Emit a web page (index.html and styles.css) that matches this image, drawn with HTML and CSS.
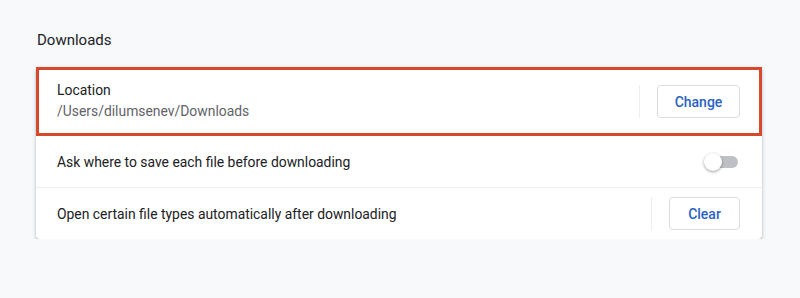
FILE: index.html
```html
<!DOCTYPE html>
<html>
<head>
<meta charset="utf-8">
<link rel="stylesheet" href="styles.css">
</head>
<body>
<div class="page">
  <h2 class="section-title">Downloads</h2>
  <div class="card">
    <div class="row row-location highlighted">
      <div class="row-text">
        <div class="label">Location</div>
        <div class="sublabel">/Users/dilumsenev/Downloads</div>
      </div>
      <div class="separator"></div>
      <button class="btn btn-change">Change</button>
    </div>
    <div class="row row-toggle">
      <div class="row-text">
        <div class="label">Ask where to save each file before downloading</div>
      </div>
      <div class="toggle"><span class="track"></span><span class="knob"></span></div>
    </div>
    <div class="row row-open bordered">
      <div class="row-text">
        <div class="label">Open certain file types automatically after downloading</div>
      </div>
      <div class="separator"></div>
      <button class="btn btn-clear">Clear</button>
    </div>
  </div>
</div>
</body>
</html>
```
FILE: styles.css
```css
html, body {
  margin: 0;
  padding: 0;
  background: #f7f9fb;
}
body {
  font-family: Roboto, "Noto Sans", Arial, sans-serif;
  color: #202124;
}
.page {
  padding: 30px 38px 0 36px;
}
.section-title {
  margin: 0 0 17px 1px;
  font-size: 15px;
  font-weight: 400;
  line-height: 20px;
  color: #202124;
}
.card {
  width: 726px;
  background: #fff;
  border-radius: 4px;
  box-shadow: 0 1px 2px rgba(60, 64, 67, 0.3), 0 2px 4px 1px rgba(60, 64, 67, 0.12);
}
.row {
  display: flex;
  align-items: center;
  padding: 0 22px 0 21px;
  box-sizing: border-box;
}
.row-location {
  height: 69px;
}
.row-toggle {
  height: 51px;
}
.row-open {
  height: 52px;
}
.bordered {
  border-top: 1px solid #eceef0;
}
.highlighted {
  box-shadow: inset 0 0 0 3px #d6492c;
}
.row-text {
  flex: 1;
  font-size: 13.9px;
  line-height: 22px;
}
.row-location .row-text {
  line-height: 21px;
  margin-top: -1px;
}
.label {
  color: #202124;
}
.sublabel {
  color: #5f6368;
}
.separator {
  width: 1px;
  height: 33px;
  background: #eceef0;
  margin-right: 17px;
}
.btn {
  height: 33px;
  box-sizing: border-box;
  border: 1px solid #dadce0;
  border-radius: 4px;
  background: #fff;
  color: #2a62c4;
  font-family: Roboto, "Noto Sans", Arial, sans-serif;
  font-size: 14px;
  font-weight: 500;
  padding: 0;
}
.btn-change {
  width: 83px;
}
.btn-clear {
  width: 71px;
}
.toggle {
  position: relative;
  width: 34px;
  height: 18px;
  margin-right: 2px;
}
.track {
  position: absolute;
  left: 4px;
  top: 3px;
  width: 30px;
  height: 12px;
  border-radius: 6px;
  background: #bdc1c6;
}
.knob {
  position: absolute;
  left: 0;
  top: 0;
  width: 18px;
  height: 18px;
  border-radius: 50%;
  background: #fff;
  box-shadow: 0 1px 3px rgba(0, 0, 0, 0.4);
}
```
